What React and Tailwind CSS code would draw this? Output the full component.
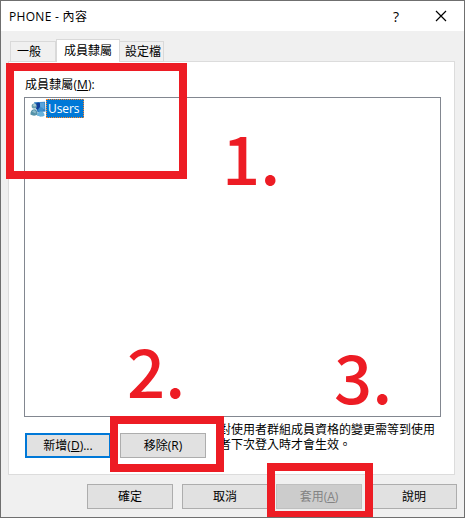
import clsx from 'clsx';

const tabs = [
  { label: '一般', active: false, className: 'w-[46px] pl-[6px]' },
  { label: '成員隸屬', active: true, className: 'w-[64px] pl-[7px]' },
  { label: '設定檔', active: false, className: 'w-[45px] pl-[5px] -ml-px' },
];

function UsersIcon() {
  return (
    <svg width="16" height="16" viewBox="0 0 16 16" className="shrink-0">
      <path d="M4 1.2 15 .8l.5 9.7-8 .8z" fill="#2f7fc4" />
      <path d="M9.5 1.5h5v7l-4-1.5z" fill="#5aa5dc" />
      <path d="M5.5 3 8 1.5l2 .8v4.5L8 9 5.5 7z" fill="#123f9c" />
      <circle cx="4.2" cy="5" r="2.6" fill="#6a9fae" />
      <circle cx="4.6" cy="4.2" r="1.4" fill="#a9cbd2" />
      <path d="M.4 13.6c0-3.2 1.2-5.4 3.8-5.4 2.4 0 3.4 2 3.6 5.4-2 1.4-5.4 1.4-7.4 0z" fill="#5592a8" />
      <path d="M2 10.5 4 9l2 1.5-.5 2z" fill="#8fbccc" />
      <circle cx="10.8" cy="8.6" r="2.4" fill="#3b8fce" />
      <path d="M7 14.6c.2-2.6 1.4-4 3.8-4s3.6 1.4 3.8 4c-1.8 1.6-5.8 1.6-7.6 0z" fill="#69b3dc" />
    </svg>
  );
}

function Button({ children, hotkey, suffix, primary, disabled, className }) {
  return (
    <button
      disabled={disabled}
      className={clsx(
        'flex h-[25px] w-[86px] shrink-0 items-center justify-center whitespace-nowrap pb-px',
        primary ? 'border-2 border-[#0078d7]' : 'border',
        !primary && !disabled && 'border-[#adadad]',
        disabled ? 'border-[#bfbfbf] bg-[#cccccc] text-[#838383]' : 'bg-[#e1e1e1]',
        className
      )}
    >
      {children}
      {hotkey && <span>(<u className="underline-offset-1">{hotkey}</u>){suffix}</span>}
    </button>
  );
}

// Red annotation frame drawn over the dialog
function Marker({ className }) {
  return <div className={clsx('pointer-events-none absolute border-8 border-[#ed1c24]', className)} />;
}

function Step({ children, className }) {
  return (
    <div className={clsx("pointer-events-none absolute font-['Noto_Sans_CJK_TC',sans-serif] text-[67px] leading-[67px] font-medium text-[#ed1c24]", className)}>
      {children}
    </div>
  );
}

export default function App() {
  return (
    <div className="relative flex h-[518px] w-[465px] flex-col overflow-hidden border border-[#6f6f6f] bg-[#f0f0f0] font-['Open_Sans','Noto_Sans_CJK_TC',sans-serif] text-[12px] leading-[15px] text-black">
      <header className="flex h-[30px] shrink-0 items-center bg-white pr-[17px] pl-2">
        <h1 className="flex-1 tracking-[0.3px]">PHONE - 內容</h1>
        <button className="mr-[36px] text-[14px]">?</button>
        <svg width="12" height="12" viewBox="0 0 12 12" fill="none" stroke="black" strokeWidth="1.2">
          <path d="m1 1 10 10M11 1 1 11" />
        </svg>
      </header>

      <nav className="z-10 mt-[7px] flex h-[24px] shrink-0 items-end pl-[9px]">
        {tabs.map((tab) => (
          <button
            key={tab.label}
            className={clsx(
              'shrink-0 border border-[#d9d9d9] text-left whitespace-nowrap',
              tab.active ? 'z-10 h-[23px] border-b-0 bg-white pb-[1px]' : 'h-[21px] bg-[#f0f0f0]',
              tab.className
            )}
          >
            {tab.label}
          </button>
        ))}
      </nav>

      <main className="-mt-px ml-[7px] flex h-[414px] w-[447px] shrink-0 flex-col border border-[#dcdcdc] bg-white pl-[15px]">
        <p className="mt-[15px] h-[20px] pl-px tracking-[0.1px]">成員隸屬(<u className="underline-offset-1">M</u>):</p>
        <div className="h-[320px] w-[417px] shrink-0 border border-[#828790] pt-px pl-[5px]">
          <div className="flex h-[19px] items-center">
            <UsersIcon />
            <span className="h-[19px] w-[38px] border border-dotted border-[#ff8728] bg-[#0078d7] pl-px leading-[17px] tracking-[-0.1px] text-white">Users</span>
          </div>
        </div>
        <div className="flex">
          <Button primary hotkey="D" suffix="..." className="mt-[16px] ml-px">新增</Button>
          <Button className="mt-[16px] ml-[9px]">移除(R)</Button>
          <p className="mt-[5px] ml-[13px] w-[220px] whitespace-nowrap">
            對使用者群組成員資格的變更需等到使用<br />者下次登入時才會生效。
          </p>
        </div>
      </main>

      <footer className="mt-[9px] flex justify-end gap-[9px] pr-[7px]">
        <Button>確定</Button>
        <Button className="-mr-px">取消</Button>
        <Button disabled hotkey="A">套用</Button>
        <Button>說明</Button>
      </footer>

      <Marker className="top-[62px] left-[5px] h-[116px] w-[181px]" />
      <Marker className="top-[415px] left-[109px] h-[56px] w-[114px]" />
      <Marker className="top-[462px] left-[266px] h-[56px] w-[106px]" />
      <Step className="top-[121px] left-[221px]">1.</Step>
      <Step className="top-[334px] left-[126px]">2.</Step>
      <Step className="top-[340px] left-[333px]">3.</Step>
    </div>
  );
}
